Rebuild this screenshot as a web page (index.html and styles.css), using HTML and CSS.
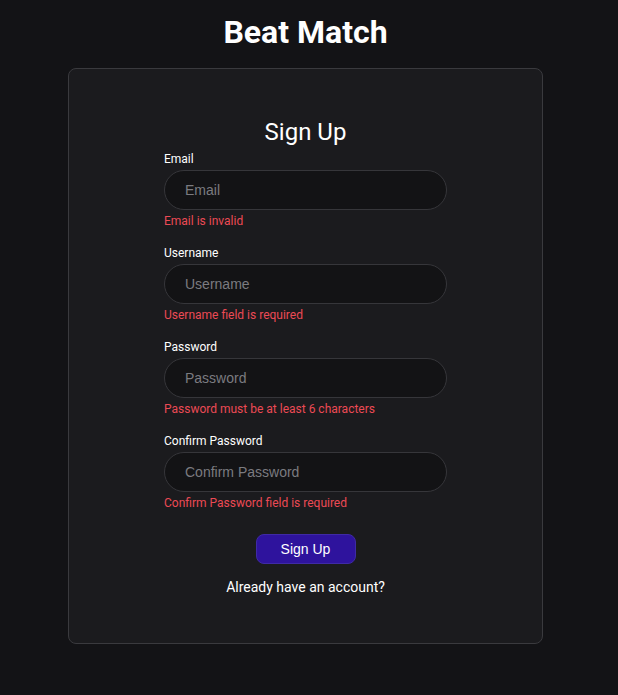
FILE: index.html
```html
<!DOCTYPE html>
<html>
<head>
<meta charset="utf-8">
<link rel="stylesheet" href="styles.css">
</head>
<body>
<h1 class="brand">Beat Match</h1>
<div class="card">
  <form class="form">
    <h2 class="title">Sign Up</h2>
    <div class="field">
      <label class="label">Email</label>
      <input class="input" type="text" placeholder="Email">
      <div class="error">Email is invalid</div>
    </div>
    <div class="field">
      <label class="label">Username</label>
      <input class="input" type="text" placeholder="Username">
      <div class="error">Username field is required</div>
    </div>
    <div class="field">
      <label class="label">Password</label>
      <input class="input" type="password" placeholder="Password">
      <div class="error">Password must be at least 6 characters</div>
    </div>
    <div class="field">
      <label class="label">Confirm Password</label>
      <input class="input" type="password" placeholder="Confirm Password">
      <div class="error">Confirm Password field is required</div>
    </div>
    <button class="btn" type="button">Sign Up</button>
    <div class="alt">Already have an account?</div>
  </form>
</div>
</body>
</html>
```
FILE: styles.css
```css
html, body {
  margin: 0;
  padding: 0;
  background: #131316;
  color: #ffffff;
  font-family: Roboto, "Liberation Sans", sans-serif;
}
body {
  display: flex;
  flex-direction: column;
  align-items: center;
  padding-right: 7px;
}
.brand {
  margin: 13px 0 17px;
  font-size: 32px;
  line-height: 38px;
  font-weight: 700;
}
.card {
  width: 473px;
  height: 574px;
  box-sizing: content-box;
  border: 1px solid #3a3a3e;
  border-radius: 8px;
  background: #1b1b1e;
  display: flex;
  justify-content: center;
}
.form {
  width: 283px;
  padding-top: 48px;
  display: flex;
  flex-direction: column;
}
.title {
  margin: 0 0 4px;
  text-align: center;
  font-size: 24px;
  line-height: 30px;
  font-weight: 400;
}
.field {
  display: flex;
  flex-direction: column;
  margin-bottom: 16px;
}
.label {
  font-size: 12px;
  line-height: 16px;
  font-weight: 400;
  margin-bottom: 3px;
}
.input {
  height: 40px;
  box-sizing: border-box;
  border: 1px solid #36363a;
  border-radius: 20px;
  background: #131315;
  padding: 0 20px;
  color: #fff;
  font-family: "Liberation Sans", Arial, sans-serif;
  font-size: 14px;
  outline: none;
}
.input::placeholder {
  color: #7b7b80;
}
.error {
  margin-top: 3px;
  font-size: 12px;
  line-height: 16px;
  color: #ec4a55;
}
.btn {
  align-self: center;
  margin-top: 7px;
  width: 100px;
  height: 30px;
  border: 1px solid #3f2aa5;
  border-radius: 8px;
  background: #2e139d;
  color: #ffffff;
  font-family: "Liberation Sans", Arial, sans-serif;
  font-size: 14px;
  padding: 0;
}
.alt {
  margin-top: 13px;
  text-align: center;
  font-size: 14px;
  line-height: 20px;
  font-weight: 400;
}
```
